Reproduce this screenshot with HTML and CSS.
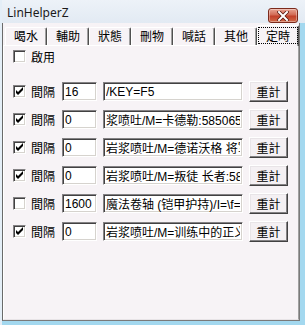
FILE: index.html
```html
<!DOCTYPE html>
<html lang="zh-Hant">
<head>
    <meta charset="UTF-8">
    <meta name="viewport" content="width=device-width, initial-scale=1.0">
    <title>LinHelperZ</title>
    <link rel="stylesheet" href="styles.css">
</head>
<body>

    <div class="window">
        <div class="titlebar">
            <span class="title">LinHelperZ</span>
            <button type="button" class="close-btn">
                <svg width="12" height="10" viewBox="0 0 12 10">
                    <path d="M2 1 L10 9 M10 1 L2 9" stroke="#5a1a10" stroke-width="3.6" stroke-linecap="square"/>
                    <path d="M2 1 L10 9 M10 1 L2 9" stroke="#ffffff" stroke-width="2" stroke-linecap="square"/>
                </svg>
            </button>
        </div>

        <div class="client">
            <div class="tabs">
                <div class="tab">喝水</div>
                <div class="tab">輔助</div>
                <div class="tab">狀態</div>
                <div class="tab">刪物</div>
                <div class="tab">喊話</div>
                <div class="tab">其他</div>
                <div class="tab active"><span class="focus">定時</span></div>
            </div>

            <div class="panel">
                <label class="enable">
                    <span class="check"></span>
                    <span class="label">啟用</span>
                </label>

                <div class="timer-row">
                    <span class="check checked"><svg width="13" height="13" viewBox="0 0 13 13"><path d="M3 5v3l2 2l5-5v-3l-5 5z" fill="#000"/></svg></span>
                    <span class="label">間隔</span>
                    <input class="interval" type="text" value="16">
                    <input class="command" type="text" value="/KEY=F5">
                    <button type="button" class="reset-btn">重計</button>
                </div>

                <div class="timer-row">
                    <span class="check checked"><svg width="13" height="13" viewBox="0 0 13 13"><path d="M3 5v3l2 2l5-5v-3l-5 5z" fill="#000"/></svg></span>
                    <span class="label">間隔</span>
                    <input class="interval" type="text" value="0">
                    <input class="command" type="text" value="浆喷吐/M=卡德勒:585065">
                    <button type="button" class="reset-btn">重計</button>
                </div>

                <div class="timer-row">
                    <span class="check checked"><svg width="13" height="13" viewBox="0 0 13 13"><path d="M3 5v3l2 2l5-5v-3l-5 5z" fill="#000"/></svg></span>
                    <span class="label">間隔</span>
                    <input class="interval" type="text" value="0">
                    <input class="command" type="text" value="岩浆喷吐/M=德诺沃格 将军">
                    <button type="button" class="reset-btn">重計</button>
                </div>

                <div class="timer-row">
                    <span class="check checked"><svg width="13" height="13" viewBox="0 0 13 13"><path d="M3 5v3l2 2l5-5v-3l-5 5z" fill="#000"/></svg></span>
                    <span class="label">間隔</span>
                    <input class="interval" type="text" value="0">
                    <input class="command" type="text" value="岩浆喷吐/M=叛徒 长者:5850">
                    <button type="button" class="reset-btn">重計</button>
                </div>

                <div class="timer-row">
                    <span class="check"></span>
                    <span class="label">間隔</span>
                    <input class="interval" type="text" value="1600">
                    <input class="command" type="text" value="魔法卷轴 (铠甲护持)/I=\f=1">
                    <button type="button" class="reset-btn">重計</button>
                </div>

                <div class="timer-row">
                    <span class="check checked"><svg width="13" height="13" viewBox="0 0 13 13"><path d="M3 5v3l2 2l5-5v-3l-5 5z" fill="#000"/></svg></span>
                    <span class="label">間隔</span>
                    <input class="interval" type="text" value="0">
                    <input class="command" type="text" value="岩浆喷吐/M=训练中的正义">
                    <button type="button" class="reset-btn">重計</button>
                </div>
            </div>
        </div>
    </div>

</body>
</html>
```

FILE: styles.css
```css
body {
    margin: 0;
    font-family: "Liberation Sans", "Noto Sans CJK TC", sans-serif;
    font-size: 12px;
    color: #000;
    background-color: #a3d8ef;
}
.window {
    width: 305px;
    height: 325px;
    box-sizing: border-box;
    display: flex;
    flex-direction: column;
    border-left: 2px solid #e4eef7;
    padding: 0 5px 4px 0;
    background-color: #a3d8ef;
}
.titlebar {
    height: 23px;
    flex: none;
    display: flex;
    align-items: flex-start;
    justify-content: space-between;
    margin-right: -5px;
    padding: 0 7px 0 5px;
    background: linear-gradient(#edf2f8, #e2eaf3);
}
.title {
    font-family: "Noto Sans", sans-serif;
    font-size: 12px;
    color: #1a1a1a;
    margin-top: 4px;
}
.close-btn {
    width: 30px;
    height: 15px;
    margin-top: 8px;
    padding: 0;
    border: 1px solid #7b2a1c;
    border-radius: 3px;
    background: linear-gradient(#e8a493, #d26b55 45%, #c2402a 55%, #d06a48);
    box-shadow: inset 0 0 0 1px rgba(255, 255, 255, 0.35);
    display: flex;
    align-items: center;
    justify-content: center;
}
.client {
    flex: 1;
    display: flex;
    flex-direction: column;
    border-left: 1px solid #6a6a6a;
    border-right: 1px solid #7a7a7a;
    border-bottom: 1px solid #7a7a7a;
    background-color: #f7f3f6;
}
.tabs {
    height: 22px;
    flex: none;
    display: flex;
    align-items: flex-end;
    padding-left: 2px;
}
.tab {
    width: 42px;
    height: 18px;
    box-sizing: border-box;
    font-family: "Noto Sans CJK TC", sans-serif;
    font-size: 12px;
    line-height: 16px;
    text-align: center;
    border-top: 1px solid #ffffff;
    border-left: 1px solid #ffffff;
    border-right: 1px solid #505050;
    border-radius: 2px 2px 0 0;
    box-shadow: inset -1px 0 #a0a0a0;
}
.tab.active {
    height: 21px;
    margin-bottom: -1px;
    padding-top: 2px;
    position: relative;
    z-index: 1;
    background-color: #f7f3f6;
}
.focus {
    display: block;
    margin: 0 1px;
    line-height: 15px;
    outline: 1px dotted #000;
}
.panel {
    flex: 1;
    border-top: 1px solid #ffffff;
    border-left: 1px solid #ffffff;
    border-right: 1px solid #a0a0a0;
    border-bottom: 1px solid #e8e4e7;
    padding: 4px 0 0 9px;
    display: flex;
    flex-direction: column;
    gap: 7px;
}
.enable {
    display: flex;
    align-items: center;
    height: 13px;
    margin-bottom: 11px;
}
.check {
    width: 13px;
    height: 13px;
    box-sizing: border-box;
    flex: none;
    background-color: #fff;
    border: 1px solid;
    border-color: #848284 #ffffff #ffffff #848284;
    box-shadow: inset 1px 1px #424142, inset -1px -1px #d6d3ce;
    position: relative;
}
.check svg {
    position: absolute;
    left: -1px;
    top: -1px;
}
.label {
    font-family: "Noto Sans CJK TC", sans-serif;
    margin-left: 5px;
}
.timer-row {
    display: flex;
    align-items: center;
    height: 21px;
}
.timer-row input {
    height: 19px;
    box-sizing: border-box;
    margin: 0 0 0 7px;
    padding: 0 2px;
    font-family: "Liberation Sans", "Noto Sans CJK SC", sans-serif;
    font-size: 12px;
    color: #000;
    background-color: #fff;
    border: 1px solid;
    border-color: #848284 #ffffff #ffffff #848284;
    box-shadow: inset 1px 1px #424142, inset -1px -1px #d6d3ce;
    outline: none;
}
.interval {
    width: 35px;
}
.timer-row input.command {
    width: 140px;
    margin-left: 6px;
}
.reset-btn {
    width: 39px;
    height: 21px;
    margin-left: 6px;
    padding: 0;
    font-family: "Noto Sans CJK TC", sans-serif;
    font-size: 12px;
    color: #000;
    background-color: #f4f0f3;
    border: 1px solid;
    border-color: #ffffff #424142 #424142 #ffffff;
    box-shadow: inset -1px -1px #848284, inset 1px 1px #e8e4e7;
}
```
